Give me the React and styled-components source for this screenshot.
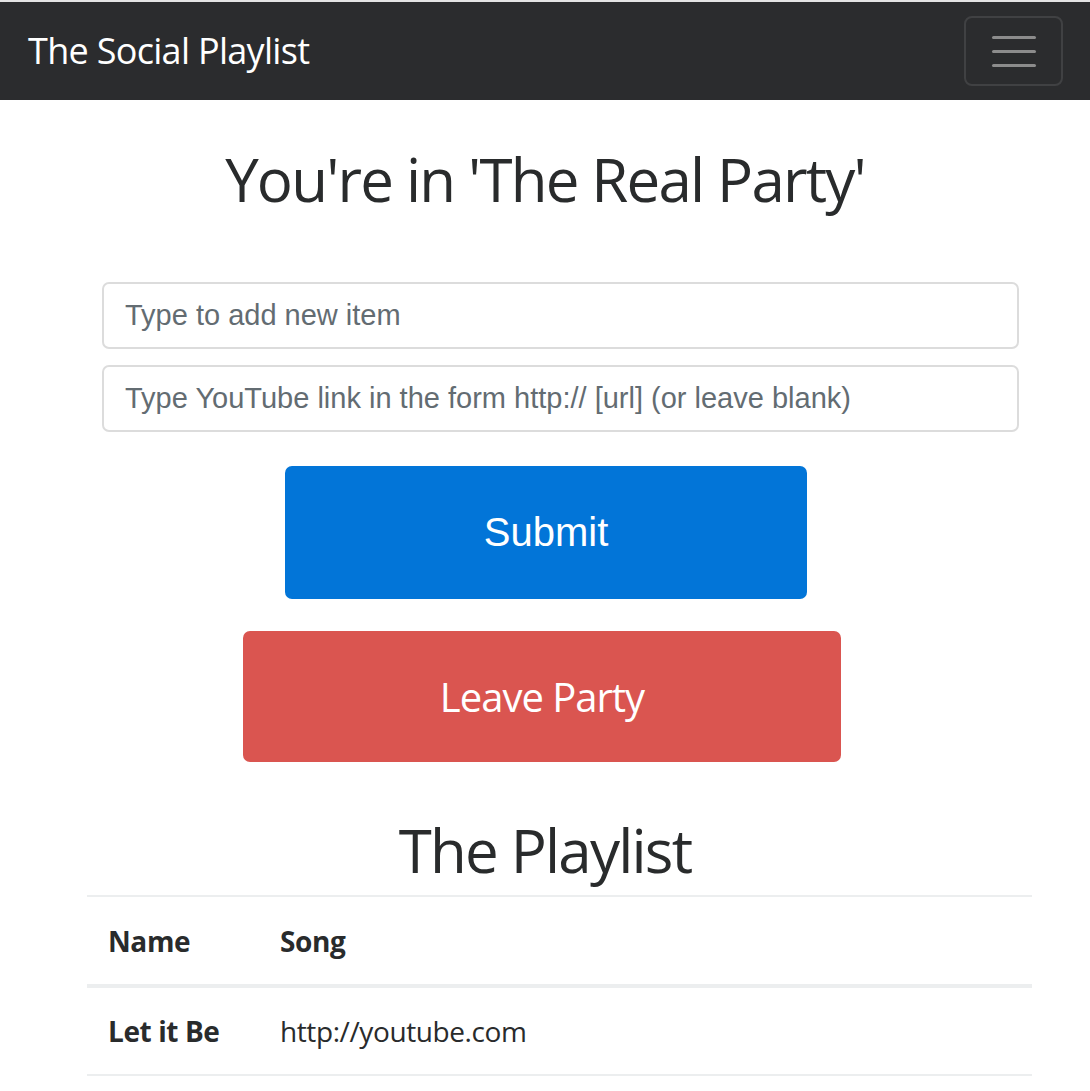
import styled, { createGlobalStyle } from "styled-components";

const GlobalStyle = createGlobalStyle`
  html, body {
    margin: 0;
    padding: 0;
    background: #fff;
  }
  body {
    font-family: "Open Sans", "Noto Sans", sans-serif;
    color: #292b2c;
  }
  * {
    box-sizing: border-box;
  }
`;

const Navbar = styled.nav`
  height: 100px;
  border-top: 2px solid #e4e4e4;
  background: #2b2c2e;
  display: flex;
  align-items: center;
  justify-content: space-between;
  padding: 0 27px 0 28px;
`;

const Brand = styled.a`
  font-size: 36px;
  letter-spacing: -0.7px;
  color: #fff;
  text-decoration: none;
  margin-top: -2px;
`;

const Toggler = styled.button`
  width: 99px;
  height: 70px;
  border: 2px solid rgba(255, 255, 255, 0.1);
  border-radius: 8px;
  background: transparent;
  display: flex;
  flex-direction: column;
  align-items: center;
  justify-content: center;
  gap: 11px;
  padding: 0;
`;

const TogglerBar = styled.span`
  display: block;
  width: 44px;
  height: 3px;
  border-radius: 2px;
  background: #8c8c8c;
`;

const Main = styled.main`
  display: flex;
  flex-direction: column;
  align-items: center;
`;

const Heading = styled.h1`
  margin: ${(p) => p.$top}px 0 0 0;
  font-size: 60px;
  line-height: 72px;
  font-weight: 500;
  letter-spacing: -1.8px;
  text-align: center;
  color: #292b2c;
`;

const Section = styled.div`
  align-self: flex-start;
  margin-left: 87px;
  width: 945px;
`;

const Form = styled.div`
  margin: 67px 13px 0 15px;
  display: flex;
  flex-direction: column;
  gap: 16px;
`;

const Input = styled.input`
  height: 67px;
  width: 100%;
  border: 2px solid #dcdcdc;
  border-radius: 7px;
  padding: 0 21px;
  font-family: "Liberation Sans", Arial, sans-serif;
  font-size: 29px;
  color: #464a4c;
  background: #fff;
  outline: none;

  &::placeholder {
    color: #636c72;
  }
`;

const Button = styled.button`
  display: block;
  width: ${(p) => p.$w}px;
  height: ${(p) => p.$h}px;
  margin: ${(p) => p.$top}px 0 0 ${(p) => p.$shift}px;
  border: none;
  border-radius: 7px;
  background: ${(p) => (p.$danger ? "#da5550" : "#0275d8")};
  color: #fff;
  font-family: ${(p) =>
    p.$danger
      ? `"Open Sans", "Noto Sans", sans-serif`
      : `"Liberation Sans", Arial, sans-serif`};
  font-size: 40px;
  letter-spacing: ${(p) => (p.$danger ? "-1px" : "0")};
  cursor: pointer;
`;

const Table = styled.table`
  width: 100%;
  margin-top: 9px;
  border-collapse: collapse;
  table-layout: fixed;
  font-size: 28px;
  letter-spacing: -0.4px;
`;

const HeadCell = styled.th`
  text-align: left;
  font-weight: 700;
  padding: 0 21px;
  height: 90px;
  width: ${(p) => (p.$w ? `${p.$w}px` : "auto")};
  border-top: 2px solid #eceeef;
  border-bottom: 4px solid #eceeef;
  vertical-align: middle;
`;

const Cell = styled.td`
  padding: 0 21px;
  height: 89px;
  font-weight: ${(p) => (p.$bold ? 700 : 400)};
  border-bottom: 2px solid #eceeef;
  vertical-align: middle;
`;

export default function App() {
  return (
    <>
      <GlobalStyle />
      <Navbar>
        <Brand href="#">The Social Playlist</Brand>
        <Toggler aria-label="Toggle navigation">
          <TogglerBar />
          <TogglerBar />
          <TogglerBar />
        </Toggler>
      </Navbar>
      <Main>
        <Heading $top={43}>You're in 'The Real Party'</Heading>
        <Section>
          <Form>
            <Input placeholder="Type to add new item" />
            <Input placeholder="Type YouTube link in the form http:// [url] (or leave blank)" />
          </Form>
        </Section>
        <Button $w={522} $h={133} $top={34} $shift={2}>
          Submit
        </Button>
        <Button $danger $w={598} $h={131} $top={32} $shift={-6}>
          Leave Party
        </Button>
        <Heading $top={52}>The Playlist</Heading>
        <Section>
          <Table>
            <thead>
              <tr>
                <HeadCell $w={172}>Name</HeadCell>
                <HeadCell>Song</HeadCell>
              </tr>
            </thead>
            <tbody>
              <tr>
                <Cell $bold>Let it Be</Cell>
                <Cell>http://youtube.com</Cell>
              </tr>
            </tbody>
          </Table>
        </Section>
      </Main>
    </>
  );
}
